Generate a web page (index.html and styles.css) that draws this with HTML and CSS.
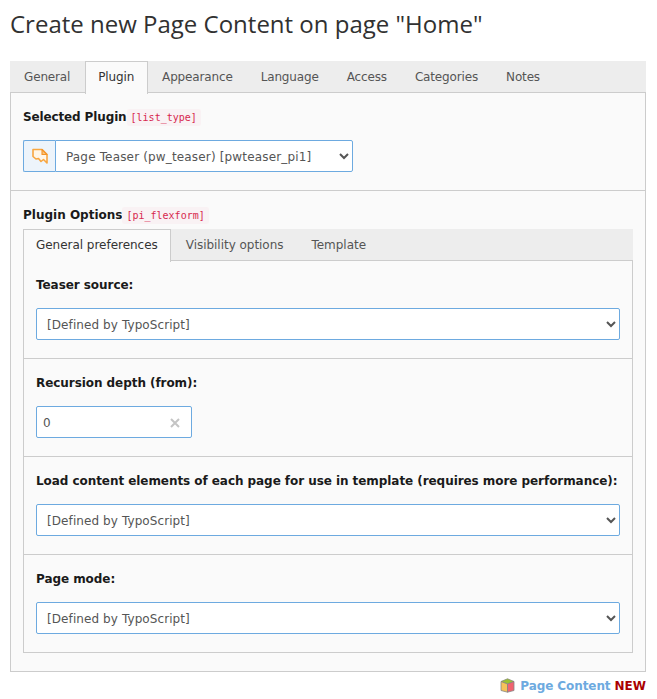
FILE: index.html
```html
<!DOCTYPE html>
<html lang="en">
<head>
    <meta charset="UTF-8">
    <meta name="viewport" content="width=device-width, initial-scale=1.0">
    <title>Create new Page Content</title>
    <link rel="stylesheet" href="styles.css">
</head>
<body>
    <h1>Create new Page Content on page "Home"</h1>

    <ul class="tabs main-tabs">
        <li>General</li>
        <li class="active">Plugin</li>
        <li>Appearance</li>
        <li>Language</li>
        <li>Access</li>
        <li>Categories</li>
        <li>Notes</li>
    </ul>

    <div class="panel">
        <div class="section section-plugin">
            <div class="label-line">
                <label>Selected Plugin</label>
                <code>[list_type]</code>
            </div>
            <div class="icon-select">
                <span class="icon-box">
                    <svg width="16" height="16" viewBox="0 0 16 16">
                        <path d="M1 1.5H10L15 6.5V15L11.5 11.5L9 13.5L6.5 10.5L4 11L1 8.5Z" fill="#fff6e8" stroke="#f8a640" stroke-width="1.6" stroke-linejoin="round"/>
                        <path d="M10 1.5V6.5H15Z" fill="#fbc27a" stroke="#f39428" stroke-width="1.1" stroke-linejoin="round"/>
                    </svg>
                </span>
                <select class="plugin-select">
                    <option>Page Teaser (pw_teaser) [pwteaser_pi1]</option>
                </select>
            </div>
        </div>

        <div class="section section-options">
            <div class="label-line">
                <label>Plugin Options</label>
                <code>[pi_flexform]</code>
            </div>

            <ul class="tabs">
                <li class="active">General preferences</li>
                <li>Visibility options</li>
                <li>Template</li>
            </ul>

            <div class="inner-panel">
                <div class="row">
                    <label>Teaser source:</label>
                    <select><option>[Defined by TypoScript]</option></select>
                </div>
                <div class="row">
                    <label>Recursion depth (from):</label>
                    <div class="number-field">
                        <span>0</span>
                        <svg width="10" height="10" viewBox="0 0 10 10">
                            <path d="M1 1L9 9M9 1L1 9" stroke="#c4c4c4" stroke-width="2"/>
                        </svg>
                    </div>
                </div>
                <div class="row">
                    <label>Load content elements of each page for use in template (requires more performance):</label>
                    <select><option>[Defined by TypoScript]</option></select>
                </div>
                <div class="row">
                    <label>Page mode:</label>
                    <select><option>[Defined by TypoScript]</option></select>
                </div>
            </div>
        </div>
    </div>

    <div class="footer">
        <svg width="15" height="15" viewBox="0 0 15 15">
            <path d="M1 3.5L7.5 0.8L14 3.5L7.5 6Z" fill="#9ac230" stroke="#8a8a7a" stroke-width="0.8" stroke-linejoin="round"/>
            <path d="M1 3.5L7.5 6V14.2L1 12.5Z" fill="#f6c25a" stroke="#858585" stroke-width="0.8" stroke-linejoin="round"/>
            <path d="M14 3.5L7.5 6V14.2L14 12.5Z" fill="#f1636f" stroke="#858585" stroke-width="0.8" stroke-linejoin="round"/>
        </svg>
        <span class="record-type">Page Content</span>
        <span class="record-new">NEW</span>
    </div>
</body>
</html>
```

FILE: styles.css
```css
body {
    margin: 0;
    padding: 0 11px 0 10px;
    background-color: #fff;
    color: #333;
    font-family: "DejaVu Sans", Verdana, sans-serif;
    font-size: 12px;
}

h1 {
    margin: 0;
    padding-top: 7px;
    height: 61px;
    box-sizing: border-box;
    font-family: "Open Sans", sans-serif;
    font-size: 24px;
    font-weight: 400;
    line-height: 33px;
    color: #313131;
}

.tabs {
    display: flex;
    gap: 2px;
    margin: 0;
    padding: 0;
    height: 32px;
    box-sizing: border-box;
    list-style: none;
    background-color: #ededed;
    border-bottom: 1px solid #ccc;
}

    .tabs li {
        padding: 0 12px;
        line-height: 31px;
        letter-spacing: -0.03px;
        color: #555;
        border: 1px solid transparent;
        border-bottom: none;
        height: 31px;
    }

    .tabs li.active {
        height: 32px;
        background-color: #fafafa;
        border-color: #ccc;
        color: #333;
    }

.main-tabs {
    padding-left: 1px;
}

    .main-tabs li {
        letter-spacing: -0.15px;
    }

    .main-tabs li.active {
        padding-right: 13px;
        margin-right: -1px;
    }

.panel {
    background-color: #fafafa;
    border: 1px solid #ccc;
    border-top: none;
    height: 579px;
    box-sizing: border-box;
}

.section {
    padding: 0 12px;
}

.section-plugin {
    height: 98px;
    padding-top: 15px;
    box-sizing: border-box;
    border-bottom: 1px solid #ccc;
}

    .section-plugin label {
        letter-spacing: -0.13px;
    }

.section-options {
    padding-top: 15px;
}

.label-line {
    display: flex;
    align-items: center;
    height: 18px;
    margin-bottom: 14px;
}

.section-options .label-line {
    margin-bottom: 5px;
}

label {
    font-weight: 700;
    color: #1a1a1a;
}

code {
    padding: 0 4px;
    line-height: 17px;
    font-family: "DejaVu Sans Mono", monospace;
    font-size: 10px;
    color: #d7284e;
    background-color: #f9f2f4;
    border-radius: 2px;
}

.icon-select {
    display: flex;
    width: 330px;
    height: 32px;
}

.icon-box {
    display: flex;
    align-items: center;
    justify-content: center;
    width: 32px;
    box-sizing: border-box;
    background-color: #edf4fb;
    border: 1px solid #6daae0;
    border-right: none;
    border-radius: 2px 0 0 2px;
}

select {
    display: block;
    width: 100%;
    height: 32px;
    padding: 2px 6px 0;
    font-family: inherit;
    font-size: 12px;
    letter-spacing: 0.09px;
    color: #555;
    background-color: #fff;
    border: 1px solid #6daae0;
    border-radius: 2px;
}

.plugin-select {
    flex: 1;
    letter-spacing: 0.16px;
    border-radius: 0 2px 2px 0;
}

.inner-panel {
    height: 392px;
    box-sizing: border-box;
    border: 1px solid #ccc;
    border-top: none;
}

.row {
    height: 98px;
    box-sizing: border-box;
    padding: 15px 12px 0;
    border-bottom: 1px solid #ccc;
}

    .row:last-child {
        border-bottom: none;
    }

    .row label {
        display: block;
        height: 18px;
        line-height: 18px;
        margin-bottom: 14px;
        letter-spacing: -0.06px;
        white-space: nowrap;
    }

.number-field {
    display: flex;
    align-items: center;
    justify-content: space-between;
    width: 156px;
    height: 32px;
    box-sizing: border-box;
    padding: 2px 11px 0 6px;
    color: #555;
    background-color: #fff;
    border: 1px solid #6daae0;
    border-radius: 2px;
}

.footer {
    display: flex;
    align-items: center;
    justify-content: flex-end;
    gap: 5px;
    height: 27px;
    font-weight: 700;
}

.record-type {
    color: #6daae0;
    letter-spacing: -0.08px;
}

.record-new {
    margin-left: -1px;
    color: #a00;
}
```
